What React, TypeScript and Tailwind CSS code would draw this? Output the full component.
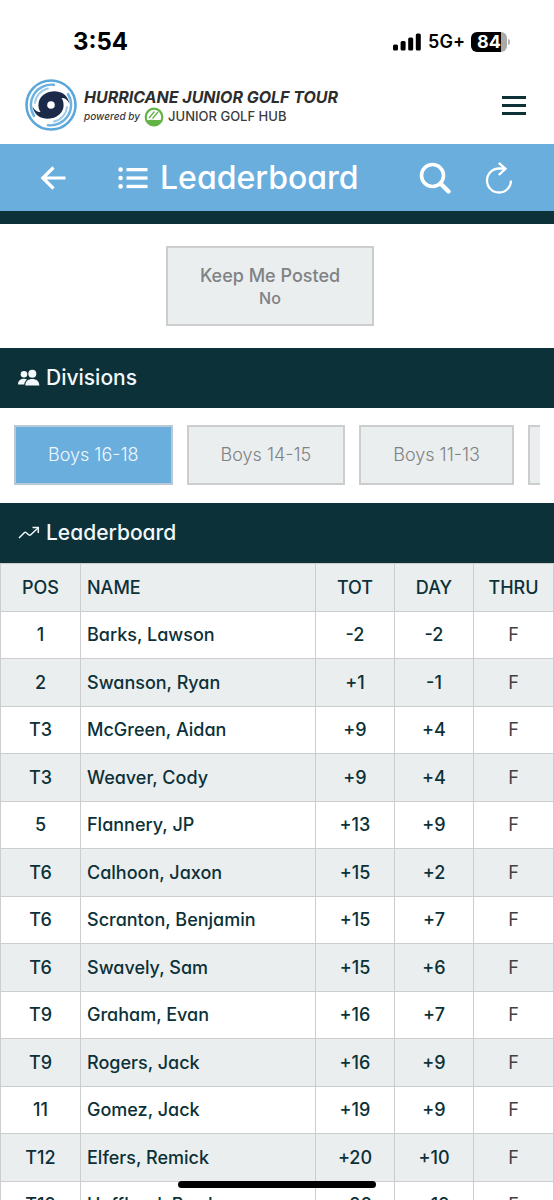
import React from "react";

type Entry = { pos: string; name: string; tot: string; day: string; thru: string };

const entries: Entry[] = [
  { pos: "1", name: "Barks, Lawson", tot: "-2", day: "-2", thru: "F" },
  { pos: "2", name: "Swanson, Ryan", tot: "+1", day: "-1", thru: "F" },
  { pos: "T3", name: "McGreen, Aidan", tot: "+9", day: "+4", thru: "F" },
  { pos: "T3", name: "Weaver, Cody", tot: "+9", day: "+4", thru: "F" },
  { pos: "5", name: "Flannery, JP", tot: "+13", day: "+9", thru: "F" },
  { pos: "T6", name: "Calhoon, Jaxon", tot: "+15", day: "+2", thru: "F" },
  { pos: "T6", name: "Scranton, Benjamin", tot: "+15", day: "+7", thru: "F" },
  { pos: "T6", name: "Swavely, Sam", tot: "+15", day: "+6", thru: "F" },
  { pos: "T9", name: "Graham, Evan", tot: "+16", day: "+7", thru: "F" },
  { pos: "T9", name: "Rogers, Jack", tot: "+16", day: "+9", thru: "F" },
  { pos: "11", name: "Gomez, Jack", tot: "+19", day: "+9", thru: "F" },
  { pos: "T12", name: "Elfers, Remick", tot: "+20", day: "+10", thru: "F" },
  { pos: "T12", name: "Huffland, Brad", tot: "+20", day: "+12", thru: "F" },
];

const divisions = ["Boys 16-18", "Boys 14-15", "Boys 11-13", "Girls 14-18"];

function StatusBar() {
  return (
    <div className="flex h-[66px] shrink-0 items-center justify-between pt-[18px] pr-[44px] pl-[73px] text-black">
      <span className="text-2xl leading-8 font-bold">3:54</span>
      <div className="flex items-center">
        <svg className="mr-[7px]" width="28" height="18" viewBox="0 0 28 18" aria-hidden="true">
          <rect x="0" y="11.5" width="5" height="6" rx="1.5" />
          <rect x="7.6" y="8" width="5" height="9.500" rx="1.5" />
          <rect x="15.200" y="4.500" width="5" height="13" rx="1.5" />
          <rect x="22.800" y="0.500" width="5" height="17" rx="1.5" />
        </svg>
        <span className="mr-[6px] text-lg leading-6 font-semibold">5G+</span>
        <div className="flex h-5 w-9 items-center justify-center overflow-hidden rounded-md bg-linear-to-r from-black from-84% to-[#a9a9a9] to-84%">
          <span className="text-lg leading-5 font-bold text-white">84</span>
        </div>
        <span className="ml-px h-[6px] w-[2px] rounded-r-full bg-[#b5b5b5]" />
      </div>
    </div>
  );
}

function StormLogo() {
  return (
    <svg width="54" height="54" viewBox="0 0 54 54" aria-hidden="true">
      <circle cx="27" cy="27" r="24.500" fill="#fff" stroke="#5ba7dc" strokeWidth="2.600" />
      <path d="M10 38A20.500 20.500 0 0 1 30 6.800" fill="none" stroke="#6db1e0" strokeWidth="2.400" strokeLinecap="round" />
      <path d="M44 16A20.500 20.500 0 0 1 24 47.200" fill="none" stroke="#6db1e0" strokeWidth="2.400" strokeLinecap="round" />
      <path d="M11 25A16.500 16.500 0 0 1 24 10.500" fill="none" stroke="#9ccaea" strokeWidth="1.800" strokeLinecap="round" />
      <path d="M43 29A16.500 16.500 0 0 1 30 43.500" fill="none" stroke="#9ccaea" strokeWidth="1.800" strokeLinecap="round" />
      <circle cx="27" cy="27" r="12.600" fill="#1c2a4a" />
      <path d="M21 16C28 11 43 12 45.500 25.500C43 21 40 19.500 37 20Z" fill="#1c2a4a" />
      <path d="M33 38C26 43 11 42 8.500 28.500C11 33 14 34.500 17 34Z" fill="#1c2a4a" />
      <circle cx="27" cy="27" r="3.800" fill="#fff" />
    </svg>
  );
}

function HubLogo() {
  return (
    <svg width="20" height="20" viewBox="0 0 20 20" aria-hidden="true">
      <circle cx="10" cy="10" r="8.300" fill="#fff" stroke="#63b345" strokeWidth="2.200" />
      <path d="M3 13.500C7 12 12 13.500 17 13A8 8 0 0 1 5 16.500Z" fill="#63b345" />
      <path d="M5 11L10.500 4.500M8.500 11.500L14 5" stroke="#63b345" strokeWidth="1.300" />
    </svg>
  );
}

function SiteHeader() {
  return (
    <header className="flex h-[78px] shrink-0 items-center justify-between pr-7 pl-6">
      <a href="#home" className="flex items-center gap-[6px]">
        <StormLogo />
        <span className="flex flex-col pt-[3px] text-[#2d2d2d]">
          <span className="text-base leading-5 font-bold whitespace-nowrap italic">HURRICANE JUNIOR GOLF TOUR</span>
          <span className="flex h-5 items-center gap-1 text-[#3b3b3b]">
            <span className="text-[10px] font-medium whitespace-nowrap italic">powered by</span>
            <HubLogo />
            <span className="text-[13px] font-medium whitespace-nowrap">JUNIOR GOLF HUB</span>
          </span>
        </span>
      </a>
      <button type="button" aria-label="Menu" className="flex flex-col gap-[5px]">
        <span className="h-[3px] w-6 bg-[#0c3138]" />
        <span className="h-[3px] w-6 bg-[#0c3138]" />
        <span className="h-[3px] w-6 bg-[#0c3138]" />
      </button>
    </header>
  );
}

function TitleBar() {
  return (
    <div className="flex h-[80px] shrink-0 items-center border-b-[13px] border-[#0c3138] bg-[#6aaede] pr-[41px] pl-10 text-white">
      <button type="button" aria-label="Back">
        <svg width="26" height="24" viewBox="0 0 26 24" fill="none" stroke="currentColor" strokeWidth="3.200" aria-hidden="true">
          <path d="M25.500 12H3M13.500 1.500L2.800 12L13.500 22.500" />
        </svg>
      </button>
      <h1 className="ml-[52px] flex items-center gap-3 text-[32px] leading-10 font-medium">
        <svg width="30" height="22" viewBox="0 0 30 22" fill="currentColor" aria-hidden="true">
          <circle cx="2.600" cy="2.600" r="2.300" />
          <circle cx="2.600" cy="11" r="2.300" />
          <circle cx="2.600" cy="19.400" r="2.300" />
          <rect x="8.500" y="1" width="21" height="3.300" />
          <rect x="8.500" y="9.400" width="21" height="3.300" />
          <rect x="8.500" y="17.800" width="21" height="3.300" />
        </svg>
        Leaderboard
      </h1>
      <div className="ml-auto flex items-center gap-[34px]">
        <button type="button" aria-label="Search">
          <svg width="32" height="32" viewBox="0 0 32 32" fill="none" stroke="currentColor" aria-hidden="true">
            <circle cx="13.500" cy="13.500" r="11" strokeWidth="3.600" />
            <path d="M21.500 21.500L29.500 29.500" strokeWidth="4.400" strokeLinecap="round" />
          </svg>
        </button>
        <button type="button" aria-label="Refresh">
          <svg width="28" height="32" viewBox="0 0 28 32" fill="none" stroke="currentColor" strokeWidth="2.300" aria-hidden="true">
            <path d="M26 18.500A12 12 0 1 1 14 6.500H20" />
            <path d="M13.800 1L20.500 6.700L13.800 13" />
          </svg>
        </button>
      </div>
    </div>
  );
}

function SectionTitle({ icon, children }: { icon: React.ReactNode; children: React.ReactNode }) {
  return (
    <h2 className="flex h-[60px] items-center gap-[6px] bg-[#0c3138] pl-[18px] text-[21px] leading-7 font-medium text-[#f2f8fb]">
      {icon}
      {children}
    </h2>
  );
}

export default function App() {
  return (
    <div className="flex h-screen flex-col overflow-hidden bg-white font-['Inter','Liberation_Sans',sans-serif] text-[#0c3138] [font-feature-settings:'cv11']">
      <StatusBar />
      <SiteHeader />
      <TitleBar />
      <main className="min-h-0 flex-1 overflow-y-auto [scrollbar-width:none]">
        <div className="flex justify-center py-[22px] pr-[14px]">
          <button
            type="button"
            className="flex h-[80px] w-[208px] flex-col items-center justify-center border-2 border-[#cbcdcf] bg-[#eaeeef] text-[#7f8284]"
          >
            <span className="text-lg leading-6 font-medium">Keep Me Posted</span>
            <span className="text-base leading-5 font-medium">No</span>
          </button>
        </div>

        <SectionTitle
          icon={
            <svg width="22" height="18" viewBox="0 0 22 18" fill="currentColor" aria-hidden="true">
              <circle cx="6" cy="5.200" r="3.300" />
              <circle cx="14.300" cy="4.700" r="4" />
              <path d="M0 15.500C0 11.500 3 9.800 6 9.800C7.200 9.800 8.300 10 9 10.400C7.500 11.600 6.300 13.300 6.200 15.500Z" />
              <path d="M7.300 16.500C7.300 12 10.500 10 14.300 10S21.300 12 21.300 16.500Z" />
            </svg>
          }
        >
          Divisions
        </SectionTitle>

        <div className="mx-[14px] mt-[17px] mb-[18px] flex gap-[14px] overflow-hidden">
          {divisions.map((name, i) => (
            <button
              key={name}
              type="button"
              aria-pressed={i === 0}
              className={
                i === 0
                  ? "h-[60px] shrink-0 border-2 border-[#b9c8d2] bg-[#6aaede] px-8 text-lg font-light whitespace-nowrap text-[#f0f8fd]"
                  : "h-[60px] shrink-0 border-2 border-[#cbcdcf] bg-[#eaeeef] px-8 text-lg font-light whitespace-nowrap text-[#7f8284]"
              }
            >
              {name}
            </button>
          ))}
        </div>

        <SectionTitle
          icon={
            <svg width="22" height="14" viewBox="0 0 22 14" fill="none" stroke="currentColor" strokeWidth="1.500" aria-hidden="true">
              <path d="M1 12L6.500 6.500C7 6 7.500 6 8 6.500L11 9C11.500 9.400 12 9.400 12.500 9L20 2" />
              <path d="M14.500 1.500H20.300V7" />
            </svg>
          }
        >
          Leaderboard
        </SectionTitle>

        <table className="w-full table-fixed border-collapse text-center text-lg leading-6 font-medium">
          <colgroup>
            <col className="w-[80px]" />
            <col />
            <col className="w-[79px]" />
            <col className="w-[79px]" />
            <col className="w-[80px]" />
          </colgroup>
          <thead>
            <tr className="h-12 bg-[#eaeeef]">
              <th scope="col" className="border border-[#cbcdcf] font-medium">POS</th>
              <th scope="col" className="border border-[#cbcdcf] pl-[6px] text-left font-medium">NAME</th>
              <th scope="col" className="border border-[#cbcdcf] font-medium">TOT</th>
              <th scope="col" className="border border-[#cbcdcf] font-medium">DAY</th>
              <th scope="col" className="border border-[#cbcdcf] font-medium">THRU</th>
            </tr>
          </thead>
          <tbody>
            {entries.map((e) => (
              <tr key={e.name} className="odd:h-[47px] even:h-12 even:bg-[#eaeeef]">
                <td className="border border-[#cbcdcf]">{e.pos}</td>
                <td className="border border-[#cbcdcf] pl-[6px] text-left whitespace-nowrap">{e.name}</td>
                <td className="border border-[#cbcdcf]">{e.tot}</td>
                <td className="border border-[#cbcdcf]">{e.day}</td>
                <td className="border border-[#cbcdcf] font-normal text-[#3f4143]">{e.thru}</td>
              </tr>
            ))}
          </tbody>
        </table>
      </main>
      <div className="fixed bottom-[12px] left-1/2 h-[7px] w-[198px] -translate-x-1/2 rounded-full bg-black" />
    </div>
  );
}
